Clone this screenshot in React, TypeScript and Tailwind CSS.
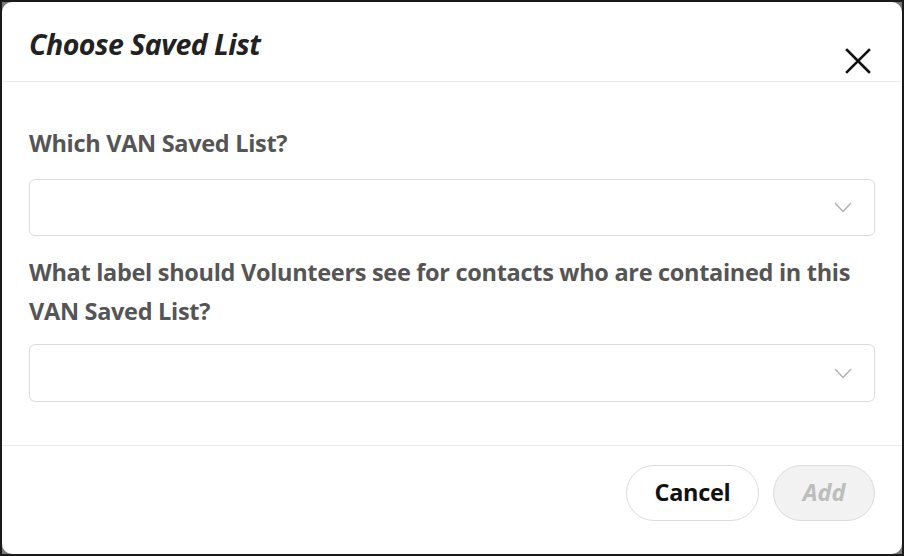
import React from "react";

function XIcon() {
  return (
    <svg width="26" height="26" viewBox="0 0 26 26" fill="none">
      <path d="M2 2 L24 24 M24 2 L2 24" stroke="#111" strokeWidth="2.6" strokeLinecap="square" />
    </svg>
  );
}

function Chevron() {
  return (
    <svg width="18" height="11" viewBox="0 0 18 11" fill="none">
      <path d="M1 1 L9 9.5 L17 1" stroke="#b0b0b0" strokeWidth="1.4" />
    </svg>
  );
}

function Select({ tall }: { tall?: boolean }) {
  return (
    <div
      className={
        tall
          ? "flex h-[58px] w-full items-center justify-end rounded-[6px] border border-[#dcdcdc] bg-white pr-[22px]"
          : "flex h-[57px] w-full items-center justify-end rounded-[6px] border border-[#dcdcdc] bg-white pr-[22px]"
      }
    >
      <Chevron />
    </div>
  );
}

export default function App() {
  const font = { fontFamily: "'Open Sans', 'Noto Sans', sans-serif" };
  return (
    <div className="h-[556px] w-[904px] border-2 border-[#1a1a1a] bg-[#7a7a7a]" style={font}>
      <div className="flex h-full w-full flex-col rounded-[10px] bg-white">
        <div className="flex h-[80px] items-start justify-between border-b border-[#ececec] pl-[27px] pr-[31px]">
          <h1 className="mt-[24px] text-[28.5px] font-bold italic leading-[36px] tracking-[-0.5px] text-[#222]">Choose Saved List</h1>
          <div className="mt-[46px]">
            <XIcon />
          </div>
        </div>
        <div className="flex flex-col border-b border-[#ececec] px-[27px] pb-[43px] pt-[42px]">
          <div className="text-[23.5px] font-bold leading-[39px] tracking-[-0.3px] text-[#555]">Which VAN Saved List?</div>
          <div className="mt-[16px]">
            <Select />
          </div>
          <div className="mt-[17px] text-[23.5px] font-bold leading-[39px] tracking-[-0.3px] text-[#555]">
            What label should Volunteers see for contacts who are contained in this
            <br />
            VAN Saved List?
          </div>
          <div className="mt-[13px]">
            <Select tall />
          </div>
        </div>
        <div className="flex justify-end gap-[14px] pr-[27px] pt-[19px]">
          <button className="h-[56px] w-[133px] rounded-full border border-[#dcdcdc] bg-white text-[23.5px] font-bold tracking-[-0.3px] text-[#111]">
            Cancel
          </button>
          <button className="h-[56px] w-[102px] rounded-full border border-[#dcdcdc] bg-[#f2f2f2] text-[23.5px] font-bold italic text-[#bdbdbd]">
            Add
          </button>
        </div>
      </div>
    </div>
  );
}
